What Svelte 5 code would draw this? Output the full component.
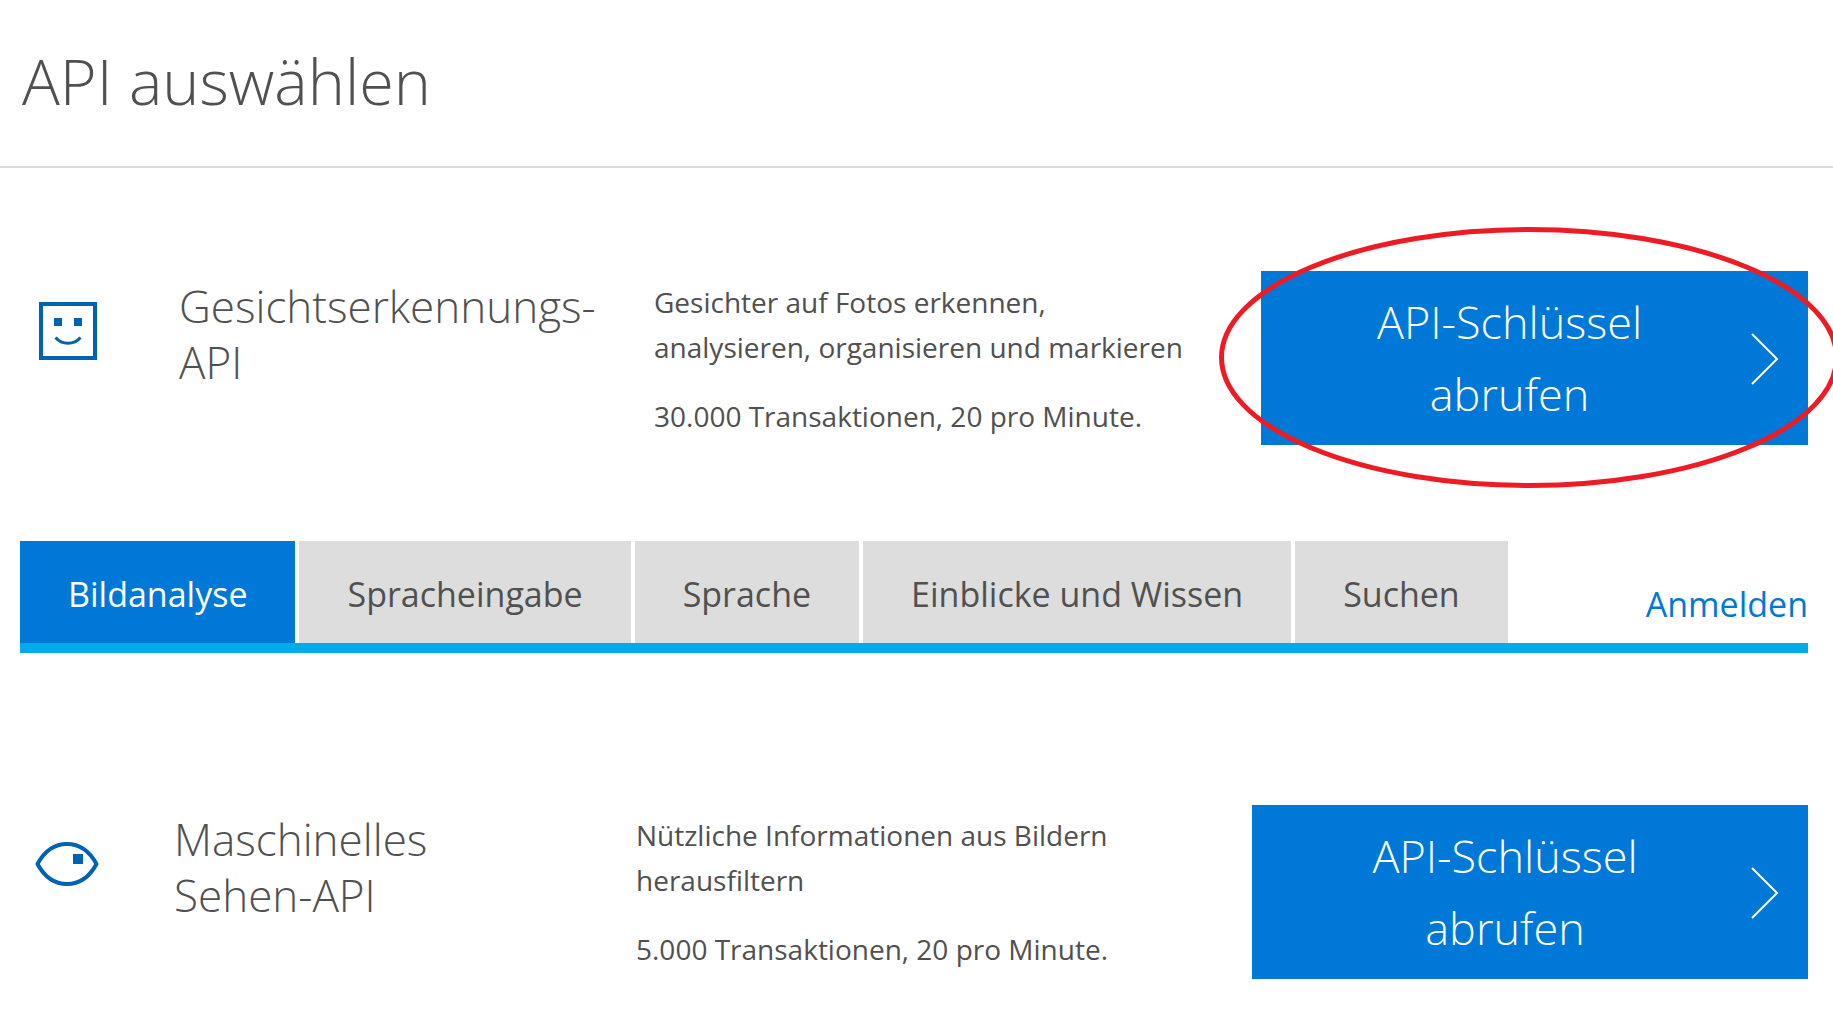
<script>
  const apis = [
    {
      id: 'face',
      name: 'Gesichtserkennungs-API',
      text: 'Gesichter auf Fotos erkennen, analysieren, organisieren und markieren',
      quota: '30.000 Transaktionen, 20 pro Minute.',
    },
    {
      id: 'vision',
      name: 'Maschinelles Sehen-API',
      text: 'Nützliche Informationen aus Bildern herausfiltern',
      quota: '5.000 Transaktionen, 20 pro Minute.',
    },
  ];
  const tabs = ['Bildanalyse', 'Spracheingabe', 'Sprache', 'Einblicke und Wissen', 'Suchen'];
  let active = $state('Bildanalyse');
</script>

{#snippet row(api)}
  <article class="api {api.id}">
    <div class="icon">
      {#if api.id === 'face'}
        <svg width="64" height="64" viewBox="0 0 64 64" aria-hidden="true">
          <rect x="5" y="5" width="54" height="54" fill="none" stroke="#0063b1" stroke-width="4" />
          <path d="M18 19h8v8h-8zM38 19h8v8h-8z" fill="#0063b1" />
          <path d="M19.500 38.500A16.500 16.500 0 0 0 44.500 38.500" fill="none" stroke="#0063b1" stroke-width="3" />
        </svg>
      {:else}
        <svg width="64" height="64" viewBox="0 0 64 64" aria-hidden="true">
          <path d="M2.500 32C9 20 19 12 32 12S55 20 61.500 32C55 44 45 52 32 52S9 44 2.500 32Z" fill="none" stroke="#0063b1" stroke-width="4" stroke-linejoin="round" />
          <rect x="38" y="22" width="10" height="10" fill="#0063b1" />
        </svg>
      {/if}
    </div>
    <h2>{api.name}</h2>
    <div class="info">
      <p>{api.text}</p>
      <p>{api.quota}</p>
    </div>
    <div class="action">
      <button class="key" type="button">
        <span>API-Schlüssel abrufen</span>
        <svg width="28" height="54" viewBox="0 0 28 54" aria-hidden="true">
          <path d="M1 3L26 28L1 53" fill="none" stroke="#fff" stroke-width="2" />
        </svg>
      </button>
      {#if api.id === 'face'}
        <svg class="mark" viewBox="0 0 620 261" preserveAspectRatio="none" aria-hidden="true">
          <ellipse cx="310" cy="130.500" rx="307.500" ry="128" fill="none" stroke="#ed1c24" stroke-width="5" />
        </svg>
      {/if}
    </div>
  </article>
{/snippet}

<main>
  <header><h1>API auswählen</h1></header>
  {@render row(apis[0])}
  <nav>
    <div class="tabs" role="tablist">
      {#each tabs as tab}
        <button type="button" role="tab" aria-selected={active === tab} class:active={active === tab} onclick={() => (active = tab)}>{tab}</button>
      {/each}
    </div>
    <a href="#anmelden">Anmelden</a>
  </nav>
  {@render row(apis[1])}
</main>

<style>
  :global(body) {
    margin: 0;
    background: #fff;
  }
  main {
    overflow: hidden;
    color: #505050;
    font-family: 'Segoe UI', 'Open Sans', 'Noto Sans', sans-serif;
  }
  h1,
  h2,
  p {
    margin: 0;
    font-weight: 300;
  }
  header {
    padding: 35px 22px 39px;
    border-bottom: 2px solid #ddd;
  }
  h1 {
    font-size: 63px;
    line-height: 92px;
  }
  .api {
    display: grid;
    align-items: start;
    margin: 0 25px 0 20px;
  }
  .face {
    grid-template-columns: 159fr 475fr 607fr 547fr;
    padding: 103px 0 96px;
  }
  .vision {
    grid-template-columns: 154fr 462fr 616fr 556fr;
    padding: 151px 0 44px;
  }
  .icon {
    padding: 28px 0 0 16px;
  }
  .vision .icon {
    padding-left: 15px;
  }
  .icon svg {
    display: block;
  }
  h2 {
    padding-top: 7px;
    font-size: 44px;
    line-height: 56px;
  }
  .vision h2 {
    padding-right: 180px;
  }
  .info {
    display: grid;
    gap: 24px;
    padding: 9px 70px 0 0;
    font-size: 28px;
    line-height: 45px;
  }
  .info p {
    font-weight: 400;
  }
  .action {
    position: relative;
  }
  .vision .action {
    padding-top: 1px;
  }
  .key {
    display: flex;
    align-items: center;
    justify-content: space-between;
    width: 100%;
    padding: 15px 29px 15px 65px;
    border: 0;
    background: #0078d7;
    color: #fff;
    font: inherit;
    font-size: 45px;
    font-weight: 300;
    line-height: 72px;
  }
  .key span {
    flex: 1;
    padding-right: 58px;
  }
  .key svg {
    flex: none;
  }
  .mark {
    position: absolute;
    top: -44px;
    left: -42px;
    width: 620px;
    height: 261px;
    pointer-events: none;
  }
  nav {
    display: flex;
    justify-content: space-between;
    margin: 0 25px 0 20px;
    border-bottom: 10px solid #00abec;
    font-size: 34px;
    line-height: 48px;
  }
  .tabs {
    display: flex;
    gap: 4px;
  }
  .tabs button {
    padding: 29px 48px 25px;
    border: 0;
    background: #ddd;
    color: #505050;
    font: inherit;
    white-space: nowrap;
  }
  .tabs .active {
    background: #0078d7;
    color: #fff;
  }
  nav a {
    padding-top: 39px;
    color: #0078d7;
    text-decoration: none;
  }
</style>
